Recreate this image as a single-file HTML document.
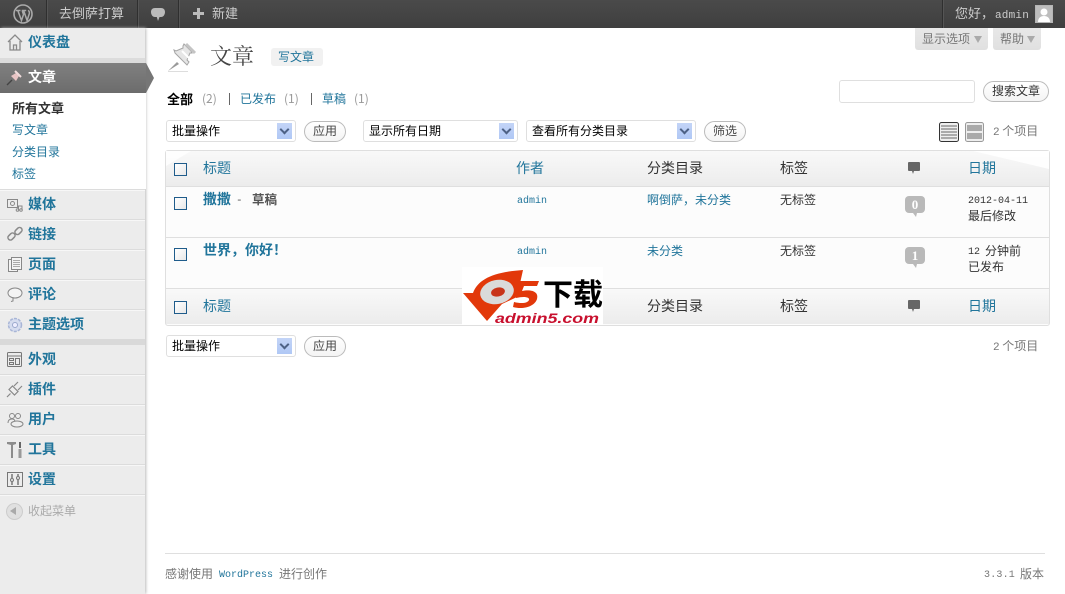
<!DOCTYPE html>
<html lang="zh"><head><meta charset="utf-8"><title>文章</title>
<style>
html,body{margin:0;padding:0;width:1065px;height:594px;overflow:hidden;background:#fff}
body{position:relative;font-family:"Liberation Sans","WenQuanYi Zen Hei","Noto Sans CJK SC",sans-serif;font-size:12px;color:#333}
.a{position:absolute}
.t{position:absolute;white-space:nowrap;line-height:16px;font-family:"WenQuanYi Zen Hei","Noto Sans CJK SC",sans-serif}
.m{font-family:"Liberation Mono",monospace;font-size:11px}
.l{color:#21759b}
.mi{font-weight:bold;font-size:14px;color:#21759b;left:28px}
.bar{position:absolute;top:0;width:1px;height:28px;background:#2f2f2f;box-shadow:1px 0 0 #555}
.sep{position:absolute;left:0;width:145px;height:1px;background:#dcdcdc;box-shadow:0 1px 0 #f7f7f7}
.sel{position:absolute;height:22px;box-sizing:border-box;border:1px solid #dfdfdf;border-radius:3px;background:#fff;color:#000}
.sel span{position:absolute;left:5px;top:2px;line-height:16px;white-space:nowrap;font-family:"WenQuanYi Zen Hei","Noto Sans CJK SC",sans-serif;font-size:12px}
.sel i{position:absolute;right:3px;top:2px;width:15px;height:16px;background:linear-gradient(#c3d4f7,#b0c8f5)}
.sel i:after{content:"";position:absolute;left:4px;top:3px;width:5px;height:5px;border-right:2px solid #4d6185;border-bottom:2px solid #4d6185;transform:rotate(45deg)}
.btn{position:absolute;height:21px;box-sizing:border-box;border:1px solid #bbb;border-radius:11px;background:linear-gradient(#fff,#f4f4f4);text-align:center;line-height:18px;color:#464646;font-size:12px;font-family:"WenQuanYi Zen Hei","Noto Sans CJK SC",sans-serif}
.cb{position:absolute;left:174px;width:11px;height:11px;border:1px solid #1f5c8b;background:linear-gradient(135deg,#fff,#e8e8e8)}
.th{position:absolute;left:166px;width:883px;height:35px;background:linear-gradient(#f9f9f9,#ececec)}
.hl{position:absolute;left:166px;width:883px;height:1px;background:#dfdfdf}
.hd{font-size:14px}
.tab{position:absolute;top:28px;height:22px;background:linear-gradient(#e8e8e8,#e0e0e0);border-radius:0 0 3px 3px;color:#777;line-height:22px;font-family:"WenQuanYi Zen Hei","Noto Sans CJK SC",sans-serif;box-sizing:border-box;padding-left:7px}
.tab i{position:absolute;top:8px;right:6px;border:4.5px solid transparent;border-top:7px solid #aaa;border-bottom:0}
.bub{position:absolute;left:905px;width:20px;height:17px;background:#b9b9b9;border-radius:4px;color:#fff;font:bold 13px/17px "Liberation Serif",serif;text-align:center}
.bub:after{content:"";position:absolute;left:8px;top:17px;border-left:3px solid transparent;border-right:1px solid transparent;border-top:4px solid #b9b9b9}
</style></head><body>

<!-- top bar -->
<div class="a" style="left:0;top:0;width:1065px;height:28px;background:linear-gradient(#4a4a4a,#3f3f3f)"></div>
<div class="bar" style="left:46px"></div><div class="bar" style="left:137px"></div><div class="bar" style="left:178px"></div><div class="bar" style="left:942px"></div>
<svg class="a" style="left:13px;top:4px" width="20" height="20" viewBox="0 0 20 20"><circle cx="10" cy="10" r="9" fill="none" stroke="#aaa" stroke-width="1.6"/><path d="M3 6.5h4.5M5 7l3.5 9.5 2-6-1.2-3.5M8.7 6.5h4.5M10.800 7l3.300 9.500 2.100-6.500c.6-1.800-.2-3-1-3.700" fill="none" stroke="#aaa" stroke-width="1.500"/></svg>
<div class="t" style="left:59px;top:5px;font-size:13px;color:#ccc">去倒萨打算</div>
<svg class="a" style="left:150px;top:7px" width="16" height="16" viewBox="0 0 16 16"><path d="M5 1h6c2.500 0 4 1.500 4 4s-1.500 5-4 5H9.500L8 14l-1.200-4H5C2.500 10 1 7.500 1 5s1.500-4 4-4z" fill="#bbb"/></svg>
<svg class="a" style="left:193px;top:8px" width="11" height="11"><path d="M4 0h3v4h4v3H7v4H4V7H0V4h4z" fill="#bbb"/></svg>
<div class="t" style="left:212px;top:5px;font-size:13px;color:#ccc">新建</div>
<div class="t" style="left:955px;top:5px;font-size:13px;color:#ccc">您好，</div>
<div class="t" style="left:995px;top:6px;color:#ccc"><span class="m" style="letter-spacing:.2px">admin</span></div>
<svg class="a" style="left:1035px;top:5px" width="18" height="18"><rect width="18" height="18" fill="#b5b5b5"/><rect x="1" y="1" width="16" height="16" fill="#bdbdbd"/><circle cx="9" cy="7" r="3.500" fill="#fff"/><path d="M3 17c0-4 2.500-6 6-6s6 2 6 6z" fill="#fff"/></svg>

<!-- sidebar -->
<div class="a" style="left:0;top:28px;width:145px;height:566px;background:#ececec;box-shadow:1px 0 3px #bbb"></div>
<div class="a" style="left:0;top:58px;width:145px;height:5px;background:#dcdcdc"></div>
<div class="a" style="left:0;top:93px;width:146px;height:96px;background:#fff"></div>
<div class="a" style="left:0;top:63px;width:146px;height:30px;background:linear-gradient(#808080,#6c6c6c)"></div>
<div class="a" style="left:146px;top:63px;border-left:8px solid #767676;border-top:15px solid transparent;border-bottom:15px solid transparent;height:0;width:0"></div>

<svg class="a" style="left:7px;top:34px" width="16" height="17" viewBox="0 0 16 17"><path d="M1 8l7-7 7 7M3 7v9h10V7M6.500 16v-5h3v5" fill="none" stroke="#8a8a8a" stroke-width="1.300"/></svg>
<div class="t mi" style="top:34px">仪表盘</div>
<svg class="a" style="left:6px;top:70px" width="16" height="16" viewBox="0 0 16 16"><path d="M1 15l5-5" stroke="#444" stroke-width="1.400"/><path d="M5 6l5-3 3 3-3 5z" fill="#e8c4c4"/><path d="M9 1l6 6" stroke="#f0dcdc" stroke-width="2"/></svg>
<div class="t mi" style="top:69px;color:#fff">文章</div>
<div class="t" style="left:12px;top:100px;font-size:13px;font-weight:bold;color:#333">所有文章</div>
<div class="t l" style="left:12px;top:122px;font-size:12px">写文章</div>
<div class="t l" style="left:12px;top:144px;font-size:12px">分类目录</div>
<div class="t l" style="left:12px;top:166px;font-size:12px">标签</div>

<div class="sep" style="top:189px"></div>
<svg class="a" style="left:7px;top:198px" width="16" height="14" viewBox="0 0 16 14" fill="none" stroke="#888"><rect x=".5" y="1.500" width="10" height="8"/><circle cx="5.500" cy="5.500" r="2"/><circle cx="10.500" cy="12" r="1.300"/><circle cx="14" cy="12" r="1.300"/><path d="M11.500 12V8h3.500v4"/></svg>
<div class="t mi" style="top:196px">媒体</div>
<div class="sep" style="top:219px"></div>
<svg class="a" style="left:6px;top:226px" width="18" height="16" viewBox="0 0 18 16" fill="none" stroke="#8a8a8a" stroke-width="1.500"><rect x="1.500" y="8" width="8" height="5" rx="2.500" transform="rotate(-45 5.500 10.500)"/><rect x="8.500" y="2.500" width="8" height="5" rx="2.500" transform="rotate(-45 12.500 5)"/></svg>
<div class="t mi" style="top:226px">链接</div>
<div class="sep" style="top:249px"></div>
<svg class="a" style="left:8px;top:257px" width="14" height="15" viewBox="0 0 14 15" fill="#f4f4f4" stroke="#888"><rect x=".5" y="2.500" width="9" height="12"/><rect x="3.500" y=".5" width="10" height="12"/><path d="M5 3.500h7M5 5.500h7M5 7.500h7M5 9.500h7" stroke="#aaa"/></svg>
<div class="t mi" style="top:256px">页面</div>
<div class="sep" style="top:279px"></div>
<svg class="a" style="left:7px;top:287px" width="16" height="15" viewBox="0 0 16 15"><ellipse cx="8" cy="6" rx="7" ry="5" fill="#f4f4f4" stroke="#888"/><path d="M6 11v3l-2 .5" fill="none" stroke="#888"/></svg>
<div class="t mi" style="top:286px">评论</div>
<div class="sep" style="top:309px"></div>
<svg class="a" style="left:7px;top:317px" width="16" height="16" viewBox="0 0 16 16"><circle cx="8" cy="8" r="6.500" fill="#d5dcef" stroke="#a8b5d6" stroke-width="1.500" stroke-dasharray="3 1.200"/><circle cx="8" cy="8" r="2.500" fill="#eef" stroke="#9aa8cc"/></svg>
<div class="t mi" style="top:316px">主题选项</div>
<div class="a" style="left:0;top:339px;width:145px;height:6px;background:#d9d9d9"></div>
<svg class="a" style="left:7px;top:352px" width="15" height="15" fill="none" stroke="#777"><rect x=".5" y=".5" width="14" height="14" rx="1"/><path d="M1 4h13M2.500 6.500h4v2h-4zM2.500 10.500h4v2h-4zM8.500 6.500h4v6h-4z"/></svg>
<div class="t mi" style="top:351px">外观</div>
<div class="sep" style="top:374px"></div>
<svg class="a" style="left:6px;top:381px" width="17" height="17" viewBox="0 0 17 17" fill="#eee" stroke="#888" stroke-width="1.200"><path d="M1 16l3.500-3.500"/><path d="M3 8.500l5.500 5.500 3.500-3.500-5.500-5.500z"/><path d="M8 5l4-4M12 9l4-4" fill="none"/></svg>
<div class="t mi" style="top:381px">插件</div>
<div class="sep" style="top:404px"></div>
<svg class="a" style="left:7px;top:412px" width="17" height="16" viewBox="0 0 17 16" fill="#eee" stroke="#888"><circle cx="5" cy="4" r="2.500"/><circle cx="11" cy="4" r="2.500"/><path d="M1 11c0-3 2-4 4-4s3 1 3 3"/><ellipse cx="10" cy="12" rx="6" ry="3"/></svg>
<div class="t mi" style="top:411px">用户</div>
<div class="sep" style="top:434px"></div>
<svg class="a" style="left:7px;top:442px" width="16" height="16" viewBox="0 0 16 16" fill="#aaa"><path d="M0 0h9v2L6 3v13H4V3L0 2z" fill="#8c8c8c"/><path d="M12 0h2v6h-2z" fill="#666"/><rect x="11.500" y="7" width="3" height="9" fill="#999"/></svg>
<div class="t mi" style="top:441px">工具</div>
<div class="sep" style="top:464px"></div>
<svg class="a" style="left:7px;top:472px" width="16" height="15" fill="none" stroke="#777"><rect x=".5" y=".5" width="15" height="14"/><path d="M5 2v4M5 10v3M11 2v2M11 8v5" stroke-width="1.500"/><circle cx="5" cy="8" r="1.500"/><circle cx="11" cy="6" r="1.500"/></svg>
<div class="t mi" style="top:471px">设置</div>
<div class="sep" style="top:494px"></div>
<div class="a" style="left:6px;top:503px;width:15px;height:15px;border-radius:50%;background:#e0e0e0;border:1px solid #ccc"></div>
<div class="a" style="left:10px;top:507px;border-right:6px solid #aaa;border-top:4px solid transparent;border-bottom:4px solid transparent"></div>
<div class="t" style="left:28px;top:503px;font-size:12px;color:#aaa">收起菜单</div>

<!-- header area -->
<div class="tab" style="left:915px;width:73px">显示选项<i></i></div>
<div class="tab" style="left:993px;width:48px">帮助<i></i></div>
<svg class="a" style="left:167px;top:41px" width="33" height="31" viewBox="0 0 33 31"><path d="M1 30l9-9 2 2z" fill="#9a9a9a"/><path d="M8 12l12 12 2-3-2-2 3-7 2 0-1-2-7-7-1 2 0 2-7 3-2-1z" fill="#e6e6e6" stroke="#a5a5a5"/><path d="M19 3l9 9" stroke="#c4c4c4" stroke-width="3"/><path d="M15 10l7 7" stroke="#fff" stroke-width="2"/><path d="M1 30.500h20" stroke="#ddd"/></svg>
<div class="t" style="left:210px;top:43px;font-size:22px;line-height:26px;color:#464646;font-family:'Noto Serif CJK SC','WenQuanYi Zen Hei',serif">文章</div>
<div class="a" style="left:271px;top:48px;width:52px;height:18px;background:#f1f1f1;border-radius:3px"></div>
<div class="t l" style="left:278px;top:49px;font-size:12px">写文章</div>

<div class="t" style="left:167px;top:91px;font-size:13px;font-weight:bold;color:#000">全部</div>
<div class="t" style="left:202px;top:91px;font-size:12px;color:#999">(2)</div>
<div class="a" style="left:229px;top:93px;width:1px;height:12px;background:#666"></div>
<div class="t l" style="left:240px;top:91px;font-size:12px">已发布</div>
<div class="t" style="left:284px;top:91px;font-size:12px;color:#999">(1)</div>
<div class="a" style="left:311px;top:93px;width:1px;height:12px;background:#666"></div>
<div class="t l" style="left:322px;top:91px;font-size:12px">草稿</div>
<div class="t" style="left:354px;top:91px;font-size:12px;color:#999">(1)</div>

<div class="a" style="left:839px;top:80px;width:136px;height:23px;box-sizing:border-box;border:1px solid #dfdfdf;border-radius:3px"></div>
<div class="btn" style="left:983px;top:81px;width:66px;color:#333">搜索文章</div>

<div class="sel" style="left:166px;top:120px;width:130px"><span>批量操作</span><i></i></div>
<div class="btn" style="left:304px;top:121px;width:42px">应用</div>
<div class="sel" style="left:363px;top:120px;width:155px"><span>显示所有日期</span><i></i></div>
<div class="sel" style="left:526px;top:120px;width:170px"><span>查看所有分类目录</span><i></i></div>
<div class="btn" style="left:704px;top:121px;width:42px">筛选</div>

<svg class="a" style="left:939px;top:122px" width="20" height="20"><rect x=".5" y=".5" width="19" height="19" rx="2" fill="#eee" stroke="#333"/><path d="M2 4h16M2 7h16M2 10h16M2 13h16M2 16h16" stroke="#666"/></svg>
<svg class="a" style="left:965px;top:122px" width="19" height="20"><rect x=".5" y=".5" width="18" height="19" rx="2" fill="#eee" stroke="#999"/><rect x="2" y="3" width="15" height="6" fill="#aaa"/><rect x="2" y="11" width="15" height="6" fill="#aaa"/></svg>
<div class="t" style="left:993px;top:123px;font-size:12px;color:#777"><span class="m">2</span> 个项目</div>

<!-- table -->
<div class="a" style="left:165px;top:150px;width:883px;height:174px;border:1px solid #dfdfdf;border-radius:3px;background:#fcfcfc"></div>
<div class="th" style="top:151px"></div>
<svg class="a" style="left:166px;top:151px" width="883" height="35"><path d="M0 0h25L0 15z" fill="#fff" opacity=".8"/><path d="M883 0v18L807 0z" fill="#fff" opacity=".9"/></svg>
<div class="hl" style="top:186px"></div>
<div class="hl" style="top:237px"></div>
<div class="hl" style="top:288px"></div>
<div class="th" style="top:289px"></div>

<div class="cb" style="top:163px"></div>
<div class="t l hd" style="left:203px;top:160px">标题</div>
<div class="t l hd" style="left:516px;top:160px">作者</div>
<div class="t hd" style="left:647px;top:160px">分类目录</div>
<div class="t hd" style="left:780px;top:160px">标签</div>
<svg class="a" style="left:908px;top:162px" width="12" height="13"><path d="M1 0h10a1 1 0 0 1 1 1v7a1 1 0 0 1-1 1H6l-1 3-1-3H1a1 1 0 0 1-1-1V1a1 1 0 0 1 1-1z" fill="#666"/></svg>
<div class="t l hd" style="left:968px;top:160px">日期</div>

<div class="cb" style="top:197px"></div>
<div class="t" style="left:203px;top:191px;font-size:14px;font-weight:bold;color:#21759b">撒撒</div>
<div class="t" style="left:236px;top:191px;color:#555"><span class="m">-</span></div>
<div class="t" style="left:252px;top:191px;font-size:12.500px;font-weight:bold;color:#555">草稿</div>
<div class="t l" style="left:517px;top:191px"><span class="m" style="font-size:10px">admin</span></div>
<div class="t l" style="left:647px;top:192px;font-size:12px">啊倒萨，未分类</div>
<div class="t" style="left:780px;top:192px;font-size:12px">无标签</div>
<div class="bub" style="top:196px">0</div>
<div class="t" style="left:968px;top:191px;color:#333"><span class="m" style="font-size:10px">2012-04-11</span></div>
<div class="t" style="left:968px;top:208px;font-size:12px">最后修改</div>

<div class="cb" style="top:248px"></div>
<div class="t" style="left:203px;top:242px;font-size:14px;font-weight:bold;color:#21759b">世界，你好！</div>
<div class="t l" style="left:517px;top:242px"><span class="m" style="font-size:10px">admin</span></div>
<div class="t l" style="left:647px;top:243px;font-size:12px">未分类</div>
<div class="t" style="left:780px;top:243px;font-size:12px">无标签</div>
<div class="bub" style="top:247px">1</div>
<div class="t" style="left:968px;top:242px"><span class="m" style="font-size:10px">12</span></div>
<div class="t" style="left:985px;top:243px;font-size:12px">分钟前</div>
<div class="t" style="left:968px;top:259px;font-size:12px">已发布</div>

<div class="cb" style="top:301px"></div>
<div class="t l hd" style="left:203px;top:298px">标题</div>
<div class="t hd" style="left:647px;top:298px">分类目录</div>
<div class="t hd" style="left:780px;top:298px">标签</div>
<svg class="a" style="left:908px;top:300px" width="12" height="13"><path d="M1 0h10a1 1 0 0 1 1 1v7a1 1 0 0 1-1 1H6l-1 3-1-3H1a1 1 0 0 1-1-1V1a1 1 0 0 1 1-1z" fill="#666"/></svg>
<div class="t l hd" style="left:968px;top:298px">日期</div>

<!-- logo -->
<svg class="a" style="left:462px;top:267px" width="141" height="58" viewBox="0 0 141 58">
<rect width="141" height="58" fill="#fff"/>
<path d="M1 26l10 0C16 12 32 5 61 3L55 30 40 37 25 54z" fill="#e2380a"/>
<ellipse cx="35" cy="25" rx="17" ry="12" fill="#dadada" transform="rotate(-12 35 25)"/>
<ellipse cx="36" cy="25" rx="7" ry="4.500" fill="#c8341a" transform="rotate(-12 36 25)"/>
<path d="M56 14h21l-2 5H62l-2 5c10-2 17 1 15 8-2 7-13 11-24 8l1-5c8 2 14 1 15-2 1-3-5-4-13-2z" fill="#e2380a"/>
<text x="81" y="38" font-family="'WenQuanYi Zen Hei','Noto Sans CJK SC',sans-serif" font-size="30" font-weight="bold" fill="#000" textLength="60" lengthAdjust="spacingAndGlyphs">下载</text>
<text x="33" y="56" font-family="'Liberation Sans',sans-serif" font-size="13.500" font-weight="bold" font-style="italic" fill="#c8102e" textLength="104" lengthAdjust="spacingAndGlyphs">admin5.com</text>
</svg>

<!-- bottom nav -->
<div class="sel" style="left:166px;top:335px;width:130px"><span>批量操作</span><i></i></div>
<div class="btn" style="left:304px;top:336px;width:42px">应用</div>
<div class="t" style="left:993px;top:338px;font-size:12px;color:#777"><span class="m">2</span> 个项目</div>

<!-- footer -->
<div class="a" style="left:165px;top:553px;width:880px;height:1px;background:#dfdfdf"></div>
<div class="t" style="left:165px;top:566px;font-size:12px;color:#777">感谢使用</div>
<div class="t l" style="left:219px;top:565px"><span class="m" style="font-size:10px">WordPress</span></div>
<div class="t" style="left:279px;top:566px;font-size:12px;color:#777">进行创作</div>
<div class="t" style="left:984px;top:565px;color:#777"><span class="m" style="font-size:10px;letter-spacing:.2px">3.3.1</span></div>
<div class="t" style="left:1020px;top:566px;font-size:12px;color:#777">版本</div>
</body></html>
